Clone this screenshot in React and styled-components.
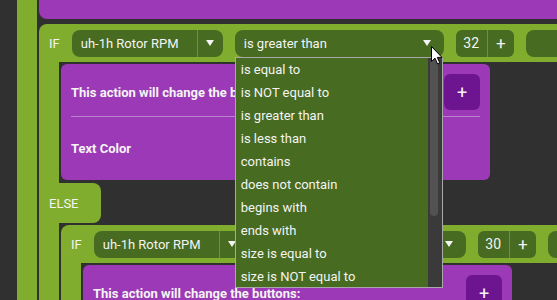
import React from 'react'
import styled, { createGlobalStyle } from 'styled-components'

const GREEN = '#80ad2d'
const DARK_GREEN = '#466b21'
const PURPLE = '#9c39b6'
const DARK_PURPLE = '#6d1591'
const BG = '#303030'

const GlobalStyle = createGlobalStyle`
  html, body {
    margin: 0;
    padding: 0;
    background: ${BG};
    overflow: hidden;
  }
  body {
    font-family: Roboto, "Noto Sans", "Liberation Sans", sans-serif;
    color: #f4f4f4;
  }
`

const OPERATORS = [
  'is equal to',
  'is NOT equal to',
  'is greater than',
  'is less than',
  'contains',
  'does not contain',
  'begins with',
  'ends with',
  'size is equal to',
  'size is NOT equal to',
]

function App() {
  return (
    <>
      <GlobalStyle />
      <Page>
        <OuterBar />
        <Column>
          <TopCard />
          <IfElse value='32' open>
            <ActionCard title='This action will change the buttons:' extra='Text Color' />
            <IfElse value='30'>
              <ActionCard title='This action will change the buttons:' extra='Text Color' />
            </IfElse>
          </IfElse>
        </Column>
      </Page>
    </>
  )
}

export default App

function IfElse({ value, open, children }) {
  const [thenPart, elsePart] = React.Children.toArray(children)
  return (
    <Block>
      <Header>
        <Keyword>IF</Keyword>
        <Select width={151}>
          <SelectLabel>uh-1h Rotor RPM</SelectLabel>
          <ArrowCell divided><Arrow /></ArrowCell>
        </Select>
        <Select width={209}>
          <SelectLabel>is greater than</SelectLabel>
          <ArrowCell><Arrow /></ArrowCell>
          {open && (
            <>
              <DropList>
                <Items>
                  {OPERATORS.map(op => <Item key={op}>{op}</Item>)}
                </Items>
                <Track><Thumb /></Track>
              </DropList>
              <Cursor viewBox='0 0 12 19'>
                <path d='M0.5 0.5 L0.5 15.5 L4 12.2 L6.6 18 L8.8 17 L6.3 11.4 L11 11.4 Z' fill='#fff' stroke='#000' strokeWidth='1' strokeLinejoin='round' />
              </Cursor>
            </>
          )}
        </Select>
        <NumberBox>
          <NumberValue>{value}</NumberValue>
          <NumberPlus>+</NumberPlus>
        </NumberBox>
        <Stub />
      </Header>
      <Body>
        <Bar />
        <Slot bottom={3}>{thenPart}</Slot>
      </Body>
      <ElseTab>ELSE</ElseTab>
      <Body>
        <Bar />
        <Slot bottom={0}>{elsePart}</Slot>
      </Body>
    </Block>
  )
}

function ActionCard({ title, extra }) {
  return (
    <Card>
      <CardHead>
        <CardTitle>{title}</CardTitle>
        <AddButton>+</AddButton>
      </CardHead>
      <Rule />
      <CardRow>{extra}</CardRow>
    </Card>
  )
}

const Page = styled.div`
  display: flex;
  height: 300px;
  width: 557px;
  padding-left: 17px;
  box-sizing: border-box;
  overflow: hidden;
  background: ${BG};
`

const OuterBar = styled.div`
  width: 20px;
  flex: none;
  background: ${GREEN};
`

const Column = styled.div`
  flex: 1;
  min-width: 0;
  margin-left: 2px;
  display: flex;
  flex-direction: column;
`

const TopCard = styled.div`
  height: 19px;
  flex: none;
  background: ${PURPLE};
  border-bottom-left-radius: 8px;
  margin-bottom: 5px;
`

const Block = styled.div`
  display: flex;
  flex-direction: column;
`

const Header = styled.div`
  height: 38px;
  flex: none;
  display: flex;
  align-items: center;
  gap: 12px;
  padding-left: 10px;
  background: ${GREEN};
  border-top-left-radius: 8px;
  white-space: nowrap;
  font-size: 13px;
`

const Keyword = styled.span`
  width: 11px;
  font-size: 13px;
`

const Select = styled.div`
  position: relative;
  width: ${props => props.width}px;
  height: 27px;
  flex: none;
  display: flex;
  align-items: center;
  background: ${DARK_GREEN};
  border-radius: 8px;
`

const SelectLabel = styled.span`
  flex: 1;
  padding-left: 9px;
  font-size: 13px;
`

const ArrowCell = styled.div`
  width: 25px;
  height: 100%;
  display: flex;
  align-items: center;
  justify-content: center;
  border-left: 1px solid ${props => props.divided ? '#6f8f45' : 'transparent'};
  margin-right: ${props => props.divided ? 0 : 4}px;
`

const Arrow = styled.span`
  width: 0;
  height: 0;
  border-left: 4px solid transparent;
  border-right: 4px solid transparent;
  border-top: 6px solid #f4f4f4;
`

const DropList = styled.div`
  position: absolute;
  top: 27px;
  left: 0;
  width: 208px;
  height: 231px;
  box-sizing: border-box;
  z-index: 10;
  display: flex;
  background: ${DARK_GREEN};
  border: 1px solid #a8a8a8;
`

const Items = styled.div`
  flex: 1;
  display: flex;
  flex-direction: column;
`

const Item = styled.div`
  height: 23px;
  line-height: 23px;
  padding-left: 5px;
  font-size: 13px;
`

const Track = styled.div`
  width: 14px;
  background: #3a3a3a;
  display: flex;
  justify-content: center;
`

const Thumb = styled.div`
  width: 8px;
  height: 158px;
  margin-right: 1px;
  border-radius: 4px;
  background: #525252;
`

const Cursor = styled.svg`
  position: absolute;
  left: 196px;
  top: 16px;
  width: 12px;
  height: 19px;
  z-index: 11;
`

const NumberBox = styled.div`
  width: 58px;
  height: 27px;
  flex: none;
  display: flex;
  align-items: center;
  background: ${DARK_GREEN};
  border-radius: 6px;
`

const NumberValue = styled.div`
  width: 31px;
  text-align: center;
  border-right: 1px solid #6f8f45;
  line-height: 27px;
  font-size: 14px;
`

const NumberPlus = styled.div`
  flex: 1;
  text-align: center;
  font-size: 17px;
`

const Stub = styled.div`
  width: 80px;
  height: 27px;
  flex: none;
  background: ${DARK_GREEN};
  border-radius: 8px;
`

const Body = styled.div`
  display: flex;
`

const Bar = styled.div`
  width: 20px;
  flex: none;
  background: ${GREEN};
`

const Slot = styled.div`
  flex: 1;
  min-width: 0;
  padding: 2px 0 ${props => props.bottom}px 2px;
`

const ElseTab = styled.div`
  width: 62px;
  height: 40px;
  box-sizing: border-box;
  padding-left: 10px;
  display: flex;
  align-items: center;
  background: ${GREEN};
  border-radius: 0 8px 8px 0;
  font-size: 13px;
`

const Card = styled.div`
  width: 429px;
  box-sizing: border-box;
  padding: 10px 10px 0;
  background: ${PURPLE};
  border-radius: 6px;
`

const CardHead = styled.div`
  height: 36px;
  display: flex;
  align-items: center;
  justify-content: space-between;
`

const CardTitle = styled.span`
  font-size: 13px;
  font-weight: 700;
  white-space: nowrap;
`

const AddButton = styled.div`
  width: 36px;
  height: 36px;
  display: flex;
  align-items: center;
  justify-content: center;
  background: ${DARK_PURPLE};
  border-radius: 6px;
  font-size: 18px;
`

const Rule = styled.div`
  height: 1px;
  margin-top: 6px;
  background: #b883cb;
`

const CardRow = styled.div`
  height: 63px;
  display: flex;
  align-items: center;
  font-size: 13px;
  font-weight: 700;
`
